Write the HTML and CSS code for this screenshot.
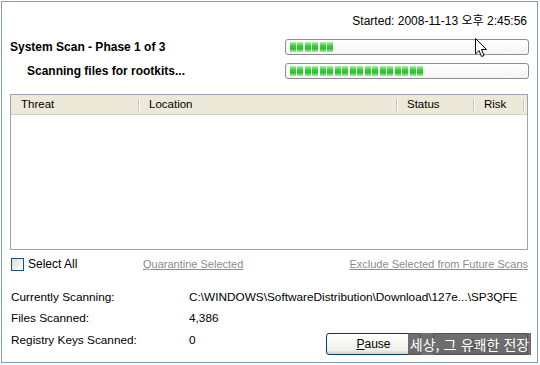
FILE: index.html
```html
<!DOCTYPE html>
<html>
<head>
<meta charset="utf-8">
<link rel="stylesheet" href="styles.css">
</head>
<body>
<div class="win">
  <div class="started">Started: 2008-11-13 오후 2:45:56</div>
  <div class="phase">
    <div class="phase-label">System Scan - Phase 1 of 3</div>
    <div class="bar"><div class="fill" style="width:45px"></div></div>
  </div>
  <div class="phase sub">
    <div class="phase-label">Scanning files for rootkits...</div>
    <div class="bar"><div class="fill" style="width:135px"></div></div>
  </div>
  <div class="list">
    <div class="list-head">
      <div class="col c1">Threat</div>
      <div class="col c2">Location</div>
      <div class="col c3">Status</div>
      <div class="col c4">Risk</div>
      <div class="col c5"></div>
    </div>
  </div>
  <div class="actions">
    <label class="check"><span class="box"></span>Select All</label>
    <span class="link quar">Quarantine Selected</span>
    <span class="link excl">Exclude Selected from Future Scans</span>
  </div>
  <div class="info">
    <div class="lbl">Currently Scanning:</div>
    <div class="val">C:\WINDOWS\SoftwareDistribution\Download\127e...\SP3QFE</div>
    <div class="lbl">Files Scanned:</div>
    <div class="val">4,386</div>
    <div class="lbl">Registry Keys Scanned:</div>
    <div class="val last">
      <span>0</span>
      <div class="buttons">
        <button class="btn"><u>P</u>ause</button>
        <button class="btn"><u>S</u>top</button>
      </div>
    </div>
  </div>
  <div class="watermark">세상, 그 유쾌한 전장</div>
  <svg class="cursor" width="13" height="21" viewBox="0 0 13 21">
    <path d="M0.5 0.5 L0.5 16 L4 12.5 L6.5 18.5 L9 17.5 L6.5 11.5 L11.5 11.5 Z" fill="#fff" stroke="#000" stroke-width="1"/>
  </svg>
</div>
</body>
</html>
```
FILE: styles.css
```css
html, body {
  margin: 0;
  padding: 0;
  background: #fff;
}
.win {
  position: relative;
  width: 537px;
  height: 362px;
  border: 1px solid #7f9db9;
  margin: 1px 0 0 1px;
  padding: 0 10px 0 8px;
  box-sizing: border-box;
  font-family: "Liberation Sans", Arial, "Noto Sans CJK KR", sans-serif;
  font-size: 11.5px;
  color: #000;
}
.started {
  text-align: right;
  padding-top: 11px;
  height: 16px;
  line-height: 16px;
  font-size: 12px;
}
.phase {
  display: flex;
  align-items: center;
  justify-content: space-between;
  margin-top: 10px;
  height: 16px;
}
.phase.sub {
  margin-top: 8px;
}
.phase-label {
  font-weight: bold;
  font-size: 12px;
}
.sub .phase-label {
  padding-left: 17px;
}
.bar {
  width: 244px;
  height: 16px;
  box-sizing: border-box;
  border: 1px solid #8e8e8e;
  border-radius: 3px;
  background: linear-gradient(#fff, #f4f4f4);
  padding: 2px 3px 2px 4px;
  margin-right: -2px;
}
.fill {
  height: 10px;
  background:
    repeating-linear-gradient(90deg, transparent 0 6px, #fff 6px 7.5px),
    linear-gradient(#b6f0ae, #3ed43e 35%, #22c422 65%, #a8eca0);
}
.list {
  margin-top: 15px;
  height: 156px;
  border: 1px solid #9aa5b0;
  box-sizing: border-box;
  margin-right: -1px;
}
.list-head {
  display: flex;
  height: 19px;
  background: #ece9d8;
  border-bottom: 1px solid #d6d2c2;
}
.col {
  box-sizing: border-box;
  padding-left: 10px;
  line-height: 19px;
  position: relative;
  flex-shrink: 0;
}
.col::after {
  content: "";
  position: absolute;
  right: 0;
  top: 4px;
  height: 12px;
  width: 1px;
  background: #c7c5b2;
  box-shadow: 1px 0 0 #fff;
}
.c1 { width: 128px; }
.c2 { width: 258px; }
.c3 { width: 77px; }
.c4 { width: 50px; }
.c5 { flex: 1 1 0; min-width: 0; padding: 0; }
.c5::after { display: none; }
.actions {
  display: flex;
  align-items: center;
  height: 16px;
  margin-top: 6px;
}
.check {
  display: flex;
  align-items: center;
  font-size: 12px;
  width: 133px;
}
.box {
  width: 11px;
  height: 11px;
  border: 1px solid #1c5180;
  background: linear-gradient(135deg, #dcdcd6, #fff);
  margin-right: 4px;
  margin-left: 1px;
}
.link {
  color: #8c8c8c;
  text-decoration: underline;
  font-size: 11px;
}
.excl {
  margin-left: auto;
  margin-right: -1px;
}
.info {
  display: grid;
  grid-template-columns: 179px 1fr;
  grid-template-rows: 21px 22px 22px;
  align-items: center;
  margin-top: 14px;
  font-size: 11.8px;
}
.lbl { padding-left: 1px; }
.val.last {
  display: flex;
  align-items: center;
}
.buttons {
  margin-left: auto;
  display: flex;
  gap: 12px;
  margin-top: 8px;
  margin-right: -1px;
}
.btn {
  width: 95px;
  height: 22px;
  border: 1px solid #003c74;
  border-radius: 3px;
  background: linear-gradient(#fff, #f0f0ea 80%, #d6d0c5);
  font-family: "Liberation Sans", Arial, sans-serif;
  font-size: 12px;
  color: #000;
  padding: 0;
}
.watermark {
  position: absolute;
  left: 406px;
  top: 331px;
  width: 123px;
  height: 22px;
  background: rgba(85, 85, 85, 0.85);
  color: #fff;
  font-family: "Noto Sans CJK KR", sans-serif;
  font-size: 14px;
  line-height: 22px;
  text-align: center;
  white-space: nowrap;
  word-spacing: 1px;
}
.cursor {
  position: absolute;
  left: 473px;
  top: 36px;
}
```
